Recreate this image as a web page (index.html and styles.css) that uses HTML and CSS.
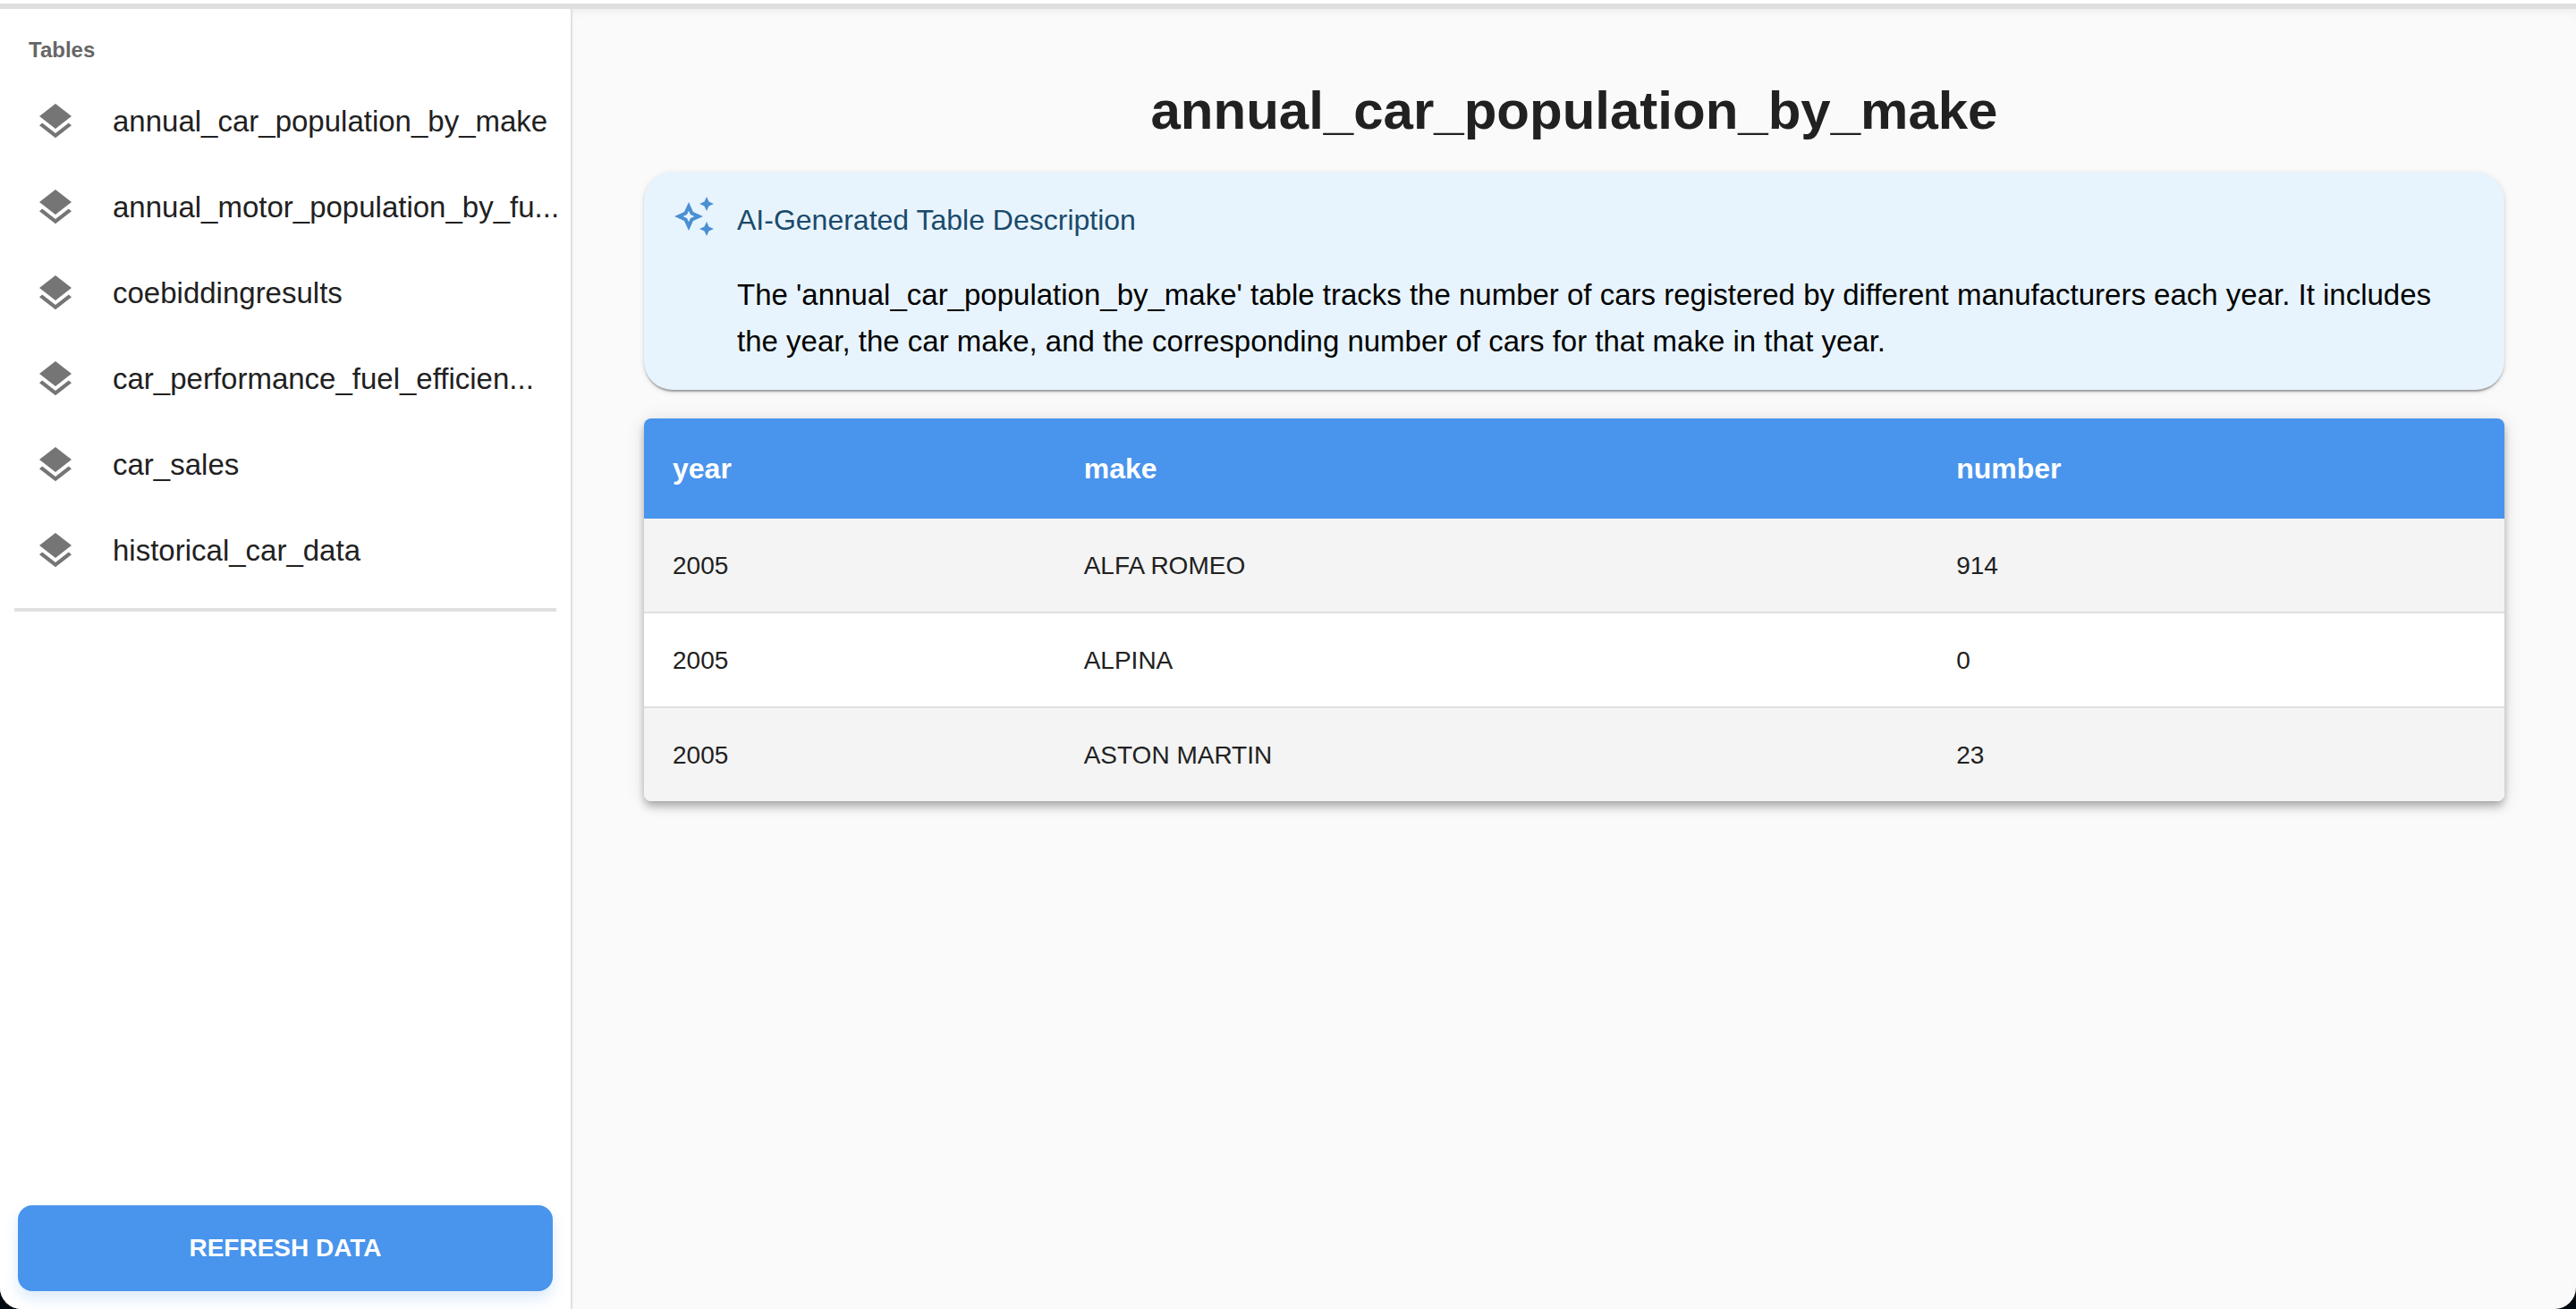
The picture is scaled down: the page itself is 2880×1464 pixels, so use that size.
FILE: index.html
```html
<!DOCTYPE html>
<html lang="en">
<head>
<meta charset="utf-8">
<title>annual_car_population_by_make</title>
<link rel="stylesheet" href="styles.css">
</head>
<body>
<svg class="sprite" aria-hidden="true">
  <symbol id="layers" viewBox="0 0 24 24"><path d="m11.99 18.54-7.37-5.73L3 14.07l9 7 9-7-1.63-1.27zM12 16l7.36-5.73L21 9l-9-7-9 7 1.63 1.27z"/></symbol>
</svg>
<div class="app">
  <header class="app-bar"></header>
  <div class="body">
    <aside class="sidebar">
      <nav aria-labelledby="tables-label">
        <h2 class="subheader" id="tables-label">Tables</h2>
        <ul class="table-list">
          <li><a class="item" href="#"><svg class="icon"><use href="#layers"/></svg><span>annual_car_population_by_make</span></a></li>
          <li><a class="item" href="#"><svg class="icon"><use href="#layers"/></svg><span>annual_motor_population_by_fu...</span></a></li>
          <li><a class="item" href="#"><svg class="icon"><use href="#layers"/></svg><span>coebiddingresults</span></a></li>
          <li><a class="item" href="#"><svg class="icon"><use href="#layers"/></svg><span>car_performance_fuel_efficien...</span></a></li>
          <li><a class="item" href="#"><svg class="icon"><use href="#layers"/></svg><span>car_sales</span></a></li>
          <li><a class="item" href="#"><svg class="icon"><use href="#layers"/></svg><span>historical_car_data</span></a></li>
        </ul>
      </nav>
      <hr class="divider">
      <button class="refresh" type="button">REFRESH DATA</button>
    </aside>
    <main class="content">
      <h1 class="title">annual_car_population_by_make</h1>
      <section class="summary">
        <svg class="icon sparkle" viewBox="0 0 24 24" aria-hidden="true"><path d="m19 9 1.25-2.75L23 5l-2.75-1.25L19 1l-1.25 2.75L15 5l2.75 1.25zm0 6-1.25 2.75L15 19l2.75 1.25L19 23l1.25-2.75L23 19l-2.75-1.25zm-7.5-5.5L9 4 6.5 9.5 1 12l5.5 2.5L9 20l2.5-5.5L17 12zm-1.51 3.49L9 15.17l-.99-2.18L5.83 12l2.18-.99L9 8.83l.99 2.18 2.18.99z"/></svg>
        <div class="summary-text">
          <h2 class="summary-title">AI-Generated Table Description</h2>
          <p class="summary-body">The 'annual_car_population_by_make' table tracks the number of cars registered by different manufacturers each year. It includes the year, the car make, and the corresponding number of cars for that make in that year.</p>
        </div>
      </section>
      <table class="data">
        <thead>
          <tr><th class="col-year" scope="col">year</th><th class="col-make" scope="col">make</th><th scope="col">number</th></tr>
        </thead>
        <tbody>
          <tr><td>2005</td><td>ALFA ROMEO</td><td>914</td></tr>
          <tr><td>2005</td><td>ALPINA</td><td>0</td></tr>
          <tr><td>2005</td><td>ASTON MARTIN</td><td>23</td></tr>
        </tbody>
      </table>
    </main>
  </div>
</div>
</body>
</html>
```
FILE: styles.css
```css
* { box-sizing: border-box; }

body {
  margin: 0;
  background: #02090f;
  color: #212121;
  font-family: "Liberation Sans", Arial, sans-serif;
  font-size: 32px;
  line-height: 48px;
}

h1, h2, p, ul { margin: 0; padding: 0; }

.sprite { display: none; }

.app {
  display: flex;
  flex-direction: column;
  min-height: 100vh;
  overflow: hidden;
  border-radius: 0 0 24px 24px;
  background: #fafafa;
}

.app-bar {
  height: 4px;
  background: #fff;
}

.body {
  display: flex;
  flex: 1;
  border-top: 6px solid #dedede;
}

.sidebar {
  display: flex;
  flex-direction: column;
  flex: none;
  width: 640px;
  padding-bottom: 20px;
  border-right: 2px solid #e0e0e0;
  background: #fff;
}

.subheader {
  padding: 22px 32px 8px;
  color: #666;
  font-size: 24px;
  font-weight: 700;
}

.table-list {
  list-style: none;
  font-size: 33px;
}

.item {
  display: flex;
  align-items: center;
  gap: 40px;
  height: 96px;
  padding-left: 38px;
  color: inherit;
  text-decoration: none;
  white-space: nowrap;
}

.icon {
  flex: none;
  width: 48px;
  height: 48px;
  fill: #757575;
}

.divider {
  width: auto;
  height: 4px;
  margin: 16px 16px 0;
  border: 0;
  background: #e0e0e0;
}

.refresh {
  height: 96px;
  margin: auto 20px 0;
  border: 0;
  border-radius: 16px;
  background: #4994ec;
  box-shadow: 0 8px 16px rgba(73, 148, 236, .2);
  color: #fff;
  font: inherit;
  font-size: 28px;
  font-weight: 700;
}

.content {
  flex: 1;
  min-width: 0;
  padding: 74px 80px 0;
  box-shadow: inset 0 8px 12px -6px rgba(0, 0, 0, .06);
}

.title {
  margin-bottom: 28px;
  font-size: 60px;
  line-height: 80px;
  text-align: center;
}

.summary {
  display: flex;
  gap: 24px;
  margin-bottom: 32px;
  padding: 26px 32px 28px;
  border-radius: 32px;
  background: #e8f4fd;
  box-shadow: 0 4px 2px -2px rgba(0, 0, 0, .2), 0 2px 2px rgba(0, 0, 0, .14), 0 2px 6px rgba(0, 0, 0, .12);
}

.sparkle { fill: #4a90d2; }

.summary-text {
  flex: 1;
  min-width: 0;
}

.summary-title {
  padding: 4px 0 34px;
  color: #1a4a6b;
  font-size: 32px;
  font-weight: 400;
}

.summary-body {
  color: #000;
  font-size: 33px;
  line-height: 52px;
}

.data {
  width: 100%;
  border-collapse: separate;
  border-spacing: 0;
  overflow: hidden;
  border-radius: 8px;
  background: #fff;
  box-shadow: 0 4px 8px -2px rgba(0, 0, 0, .2), 0 8px 10px rgba(0, 0, 0, .14), 0 2px 20px rgba(0, 0, 0, .12);
  text-align: left;
}

th {
  padding: 32px;
  background: #4994ec;
  color: #fff;
}

td {
  height: 106px;
  padding: 2px 32px 0;
  border-bottom: 2px solid #e0e0e0;
  font-size: 28px;
}

tbody tr:nth-child(odd) { background: #f4f4f4; }

tbody tr:last-child td {
  height: 104px;
  border-bottom: 0;
}

.col-year { width: 22.1%; }
.col-make { width: 46.9%; }
```
